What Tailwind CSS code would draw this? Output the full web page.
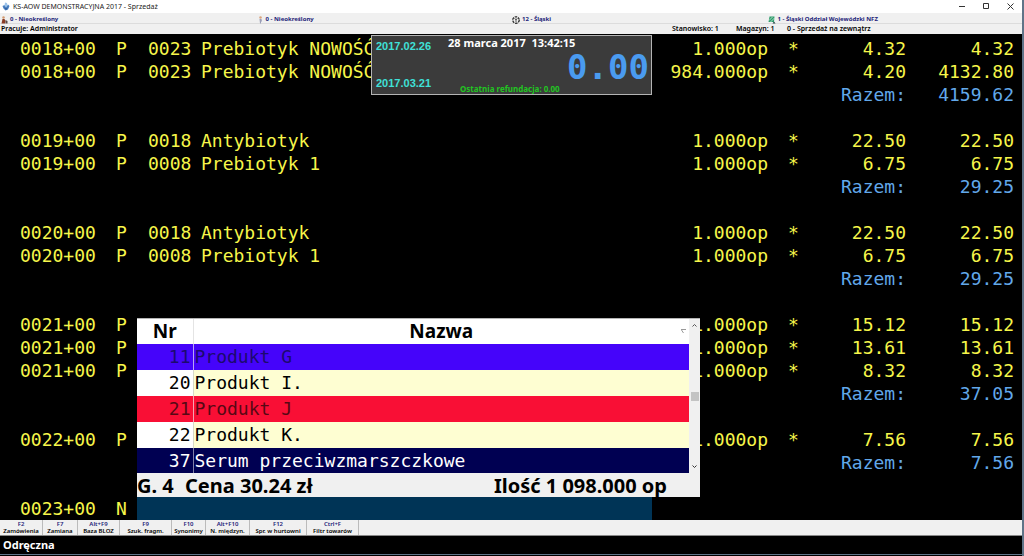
<!DOCTYPE html>
<html lang="pl">
<head>
<meta charset="utf-8">
<title>KS-AOW DEMONSTRACYJNA 2017 - Sprzedaż</title>
<script src="https://cdn.jsdelivr.net/npm/@tailwindcss/browser@4"></script>
</head>
<body class="flex h-screen flex-col overflow-hidden border-r-2 border-[#5f7488] bg-black font-['Noto_Sans',sans-serif]">

<header class="flex h-[13px] shrink-0 items-center bg-white pl-[2px] text-[7px] leading-[13px] text-[#222]">
  <svg class="mr-[3px] h-[9px] w-2" viewBox="0 0 16 18" aria-hidden="true"><path d="M1 8l4-2 3 3 4-4 3 3-3 7-5 2-4-4z" fill="#4a7fc0"/><path d="M6 1l4 1 1 5-3 4-3-4z" fill="#9cc3ea"/><path d="M4 10l4 3 4-2-4 5z" fill="#2c5a9c"/></svg>
  <h1>KS-AOW DEMONSTRACYJNA 2017 - Sprzedaż</h1>
  <div class="ml-auto flex gap-1 pr-[2px]">
    <button type="button" aria-label="Minimalizuj" class="flex h-[13px] w-5 items-center justify-center"><svg class="h-[7px] w-[7px]" viewBox="0 0 7 7" stroke="#333" fill="none"><path d="M0 3.5h6"/></svg></button>
    <button type="button" aria-label="Maksymalizuj" class="flex h-[13px] w-5 items-center justify-center"><svg class="h-[7px] w-[7px]" viewBox="0 0 7 7" stroke="#333" fill="none"><path d="M.5 .5h5v5h-5z"/></svg></button>
    <button type="button" aria-label="Zamknij" class="flex h-[13px] w-5 items-center justify-center"><svg class="h-[7px] w-[7px]" viewBox="0 0 7 7" stroke="#333" fill="none"><path d="M.5 .5l6 6M6.5 .5l-6 6"/></svg></button>
  </div>
</header>

<div class="grid h-[11px] shrink-0 grid-cols-4 border-b border-[#dcdcdc] bg-[#f0f0f0] pt-px text-[6px] leading-[11px] font-bold text-[#1c1c78]">
  <div class="flex items-center gap-[2px] pl-px">
    <svg class="h-2 w-[7px]" viewBox="0 0 14 16" aria-hidden="true"><circle cx="5" cy="3" r="2.500" fill="#d39a70"/><path d="M3 6h4l2 4-1 5H1z" fill="#8a3b25"/><path d="M9 8l4 2v5H9z" fill="#5a4a48"/></svg>
    <span>0 - Nieokreślony</span>
  </div>
  <div class="flex items-center gap-[2px] pl-px">
    <svg class="h-2 w-[7px]" viewBox="0 0 14 16" aria-hidden="true"><circle cx="7" cy="3" r="2.500" fill="#d9a27c"/><path d="M5 6h4l1 5H8v4H6z" fill="#9a9fb8"/></svg>
    <span>0 - Nieokreślony</span>
  </div>
  <div class="flex items-center gap-[2px] pl-px">
    <svg class="h-2 w-2" viewBox="0 0 16 16" aria-hidden="true"><circle cx="8" cy="8" r="6.500" fill="none" stroke="#222" stroke-width="2.500" stroke-dasharray="5 1.800"/><path d="M8 6v6M5 5l3 2 3-2" fill="none" stroke="#222" stroke-width="1.500"/></svg>
    <span>12 - Śląski</span>
  </div>
  <div class="flex items-center gap-[2px] pl-px">
    <svg class="h-2 w-2" viewBox="0 0 16 16" aria-hidden="true"><path d="M3 1h10l-1 11H1z" fill="#2f9c6c"/><path d="M2 9l7-7M5 12l8-8" stroke="#d5f2e2" stroke-width="1.500"/><path d="M9 15h6l-3-4z" fill="#224444"/></svg>
    <span>1 - Śląski Oddział Wojewódzki NFZ</span>
  </div>
</div>

<div class="flex h-[10px] shrink-0 items-center bg-[#f0f0f0] pl-px text-[7px] leading-[10px] font-semibold text-black">
  <span>Pracuje: Administrator</span>
  <div class="ml-auto flex w-[350px]">
    <span class="w-16">Stanowisko: 1</span>
    <span class="w-[51px]">Magazyn: 1</span>
    <span>0 - Sprzedaż na zewnątrz</span>
  </div>
</div>

<main class="relative min-h-0 flex-1 bg-black pt-[3px]">
  <table class="w-full table-fixed font-['DejaVu_Sans_Mono',monospace] text-[18px] leading-[23px] whitespace-pre text-[#f6f64a]">
    <colgroup>
      <col class="w-[116px]"><col class="w-[21px]"><col class="w-16"><col><col class="w-[116px]"><col class="w-[42px]"><col class="w-24"><col class="w-[116px]">
    </colgroup>
    <tbody>
      <tr class="h-[23px]"><td class="pl-5">0018+00</td><td>P</td><td class="pl-[11px]">0023</td><td>Prebiotyk NOWOŚĆ</td><td class="text-right">1.000op</td><td class="pl-5">*</td><td class="text-right">4.32</td><td class="pr-2 text-right">4.32</td></tr>
      <tr class="h-[23px]"><td class="pl-5">0018+00</td><td>P</td><td class="pl-[11px]">0023</td><td>Prebiotyk NOWOŚĆ</td><td class="text-right">984.000op</td><td class="pl-5">*</td><td class="text-right">4.20</td><td class="pr-2 text-right">4132.80</td></tr>
      <tr class="h-[23px] text-[#62a8ea]"><td colspan="6"></td><td class="text-right">Razem:</td><td class="pr-2 text-right">4159.62</td></tr>
      <tr class="h-[23px]"><td colspan="8"></td></tr>
      <tr class="h-[23px]"><td class="pl-5">0019+00</td><td>P</td><td class="pl-[11px]">0018</td><td>Antybiotyk</td><td class="text-right">1.000op</td><td class="pl-5">*</td><td class="text-right">22.50</td><td class="pr-2 text-right">22.50</td></tr>
      <tr class="h-[23px]"><td class="pl-5">0019+00</td><td>P</td><td class="pl-[11px]">0008</td><td>Prebiotyk 1</td><td class="text-right">1.000op</td><td class="pl-5">*</td><td class="text-right">6.75</td><td class="pr-2 text-right">6.75</td></tr>
      <tr class="h-[23px] text-[#62a8ea]"><td colspan="6"></td><td class="text-right">Razem:</td><td class="pr-2 text-right">29.25</td></tr>
      <tr class="h-[23px]"><td colspan="8"></td></tr>
      <tr class="h-[23px]"><td class="pl-5">0020+00</td><td>P</td><td class="pl-[11px]">0018</td><td>Antybiotyk</td><td class="text-right">1.000op</td><td class="pl-5">*</td><td class="text-right">22.50</td><td class="pr-2 text-right">22.50</td></tr>
      <tr class="h-[23px]"><td class="pl-5">0020+00</td><td>P</td><td class="pl-[11px]">0008</td><td>Prebiotyk 1</td><td class="text-right">1.000op</td><td class="pl-5">*</td><td class="text-right">6.75</td><td class="pr-2 text-right">6.75</td></tr>
      <tr class="h-[23px] text-[#62a8ea]"><td colspan="6"></td><td class="text-right">Razem:</td><td class="pr-2 text-right">29.25</td></tr>
      <tr class="h-[23px]"><td colspan="8"></td></tr>
      <tr class="h-[23px]"><td class="pl-5">0021+00</td><td>P</td><td></td><td></td><td class="text-right">1.000op</td><td class="pl-5">*</td><td class="text-right">15.12</td><td class="pr-2 text-right">15.12</td></tr>
      <tr class="h-[23px]"><td class="pl-5">0021+00</td><td>P</td><td></td><td></td><td class="text-right">1.000op</td><td class="pl-5">*</td><td class="text-right">13.61</td><td class="pr-2 text-right">13.61</td></tr>
      <tr class="h-[23px]"><td class="pl-5">0021+00</td><td>P</td><td></td><td></td><td class="text-right">1.000op</td><td class="pl-5">*</td><td class="text-right">8.32</td><td class="pr-2 text-right">8.32</td></tr>
      <tr class="h-[23px] text-[#62a8ea]"><td colspan="6"></td><td class="text-right">Razem:</td><td class="pr-2 text-right">37.05</td></tr>
      <tr class="h-[23px]"><td colspan="8"></td></tr>
      <tr class="h-[23px]"><td class="pl-5">0022+00</td><td>P</td><td></td><td></td><td class="text-right">1.000op</td><td class="pl-5">*</td><td class="text-right">7.56</td><td class="pr-2 text-right">7.56</td></tr>
      <tr class="h-[23px] text-[#62a8ea]"><td colspan="6"></td><td class="text-right">Razem:</td><td class="pr-2 text-right">7.56</td></tr>
      <tr class="h-[23px]"><td colspan="8"></td></tr>
      <tr class="h-[23px]"><td class="pl-5">0023+00</td><td>N</td><td colspan="2"><input type="text" aria-label="Nazwa towaru" class="block h-[23px] w-full bg-[#003456] px-1 outline-none"></td><td colspan="4"></td></tr>
    </tbody>
  </table>

  <!-- Receipt summary -->
  <section class="absolute top-px left-[371px] grid h-[60px] w-[281px] grid-cols-[72px_1fr_72px] border border-[#b4b4b4] bg-[#3b3b3b]">
    <div class="flex flex-col justify-between py-1 pl-1 font-['Liberation_Sans',sans-serif] text-[11px] leading-[13px] font-bold text-[#3fe0d8]">
      <span>2017.02.26</span>
      <span>2017.03.21</span>
    </div>
    <div class="col-span-2 flex flex-col">
      <p class="pl-1 text-[11px] leading-[14px] font-bold whitespace-pre text-white">28 marca 2017  13:42:15</p>
      <output class="flex-1 pr-[2px] text-right font-['DejaVu_Sans_Mono',monospace] text-[34px] leading-[34px] font-bold text-[#4a9bf0]">0.00</output>
      <p class="pl-4 text-[8px] leading-[10px] font-bold text-[#22c522]">Ostatnia refundacja: 0.00</p>
    </div>
  </section>

  <!-- Product picker -->
  <section class="absolute top-[284px] left-[137px] w-[563px] border-t border-[#b4b4b4] bg-[#f0f0f0] text-black">
    <div class="flex">
      <table class="flex-1 table-fixed border-collapse">
        <colgroup><col class="w-14"><col></colgroup>
        <thead class="bg-white text-[19px] leading-[25px] font-bold">
          <tr class="h-[25px]"><th scope="col">Nr</th><th scope="col" class="relative border-l border-[#e4e4e4]">Nazwa<svg class="absolute top-[10px] right-[3px] h-[5px] w-[5px]" viewBox="0 0 5 5" stroke="#999" fill="none" aria-hidden="true"><path d="M0 .5h5M.5 1l2 3"/></svg></th></tr>
        </thead>
        <tbody class="font-['DejaVu_Sans_Mono',monospace] text-[18px] leading-[26px]">
          <tr class="h-[26px] bg-[#4504fa] text-[#1c0a6e]"><td class="pr-[2px] text-right">11</td><td class="border-l border-[#b9a6f5] pl-px">Produkt G</td></tr>
          <tr class="h-[26px] bg-[#fefed2]"><td class="bg-white pr-[2px] text-right">20</td><td class="border-l border-[#d8d8c8] pl-px">Produkt I.</td></tr>
          <tr class="h-[26px] bg-[#f90f35] text-[#560814]"><td class="pr-[2px] text-right">21</td><td class="border-l border-[#f5a6b3] pl-px">Produkt J</td></tr>
          <tr class="h-[26px] bg-[#fefed2]"><td class="bg-white pr-[2px] text-right">22</td><td class="border-l border-[#d8d8c8] pl-px">Produkt K.</td></tr>
          <tr class="h-[25px] bg-[#000052] leading-[25px] text-white"><td class="pr-[2px] text-right">37</td><td class="border-l border-[#8080a8] pl-px">Serum przeciwzmarszczkowe</td></tr>
        </tbody>
      </table>
      <div class="flex w-[11px] flex-col items-center justify-between bg-[#f0f0f0] py-1">
        <svg class="h-[5px] w-[5px]" viewBox="0 0 5 5" stroke="#555" fill="none" aria-hidden="true"><path d="M.5 3.500l2-2 2 2"/></svg>
        <div class="h-[9px] w-2 bg-[#c3c3c3]"></div>
        <svg class="h-[5px] w-[5px]" viewBox="0 0 5 5" stroke="#333" fill="none" aria-hidden="true"><path d="M.5 1.500l2 2 2-2"/></svg>
      </div>
    </div>
    <div class="flex h-6 items-center pt-[2px] text-[20px] leading-[22px] font-bold">
      <span class="w-12">G. 4</span>
      <span>Cena 30.24 zł</span>
      <span class="ml-auto pr-[33px]">Ilość 1 098.000 op</span>
    </div>
  </section>
</main>

<nav class="flex h-4 shrink-0 border-b border-[#888] bg-[#f0f0f0] text-[6px] leading-[7px] font-semibold text-black" aria-label="Klawisze funkcyjne">
  <button type="button" class="w-[43px] border-r border-[#bbb]"><span class="block text-[#1c1c78]">F2</span>Zamówienia</button>
  <button type="button" class="w-[35px] border-r border-[#bbb]"><span class="block text-[#1c1c78]">F7</span>Zamiana</button>
  <button type="button" class="w-[42px] border-r border-[#bbb]"><span class="block text-[#1c1c78]">Alt+F9</span>Baza BLOZ</button>
  <button type="button" class="w-[52px] border-r border-[#bbb]"><span class="block text-[#1c1c78]">F9</span>Szuk. fragm.</button>
  <button type="button" class="w-[34px] border-r border-[#bbb]"><span class="block text-[#1c1c78]">F10</span>Synonimy</button>
  <button type="button" class="w-[44px] border-r border-[#bbb]"><span class="block text-[#1c1c78]">Alt+F10</span>N. międzyn.</button>
  <button type="button" class="w-[57px] border-r border-[#bbb]"><span class="block text-[#1c1c78]">F12</span>Spr. w hurtowni</button>
  <button type="button" class="w-[52px] border-r border-[#bbb]"><span class="block text-[#1c1c78]">Ctrl+F</span>Filtr towarów</button>
</nav>

<footer class="h-5 shrink-0 bg-black pb-px">
  <p class="h-[19px] border-b border-[#5f7488] pl-[3px] text-[11px] leading-[18px] font-bold text-white">Odręczna</p>
</footer>
</body>
</html>
